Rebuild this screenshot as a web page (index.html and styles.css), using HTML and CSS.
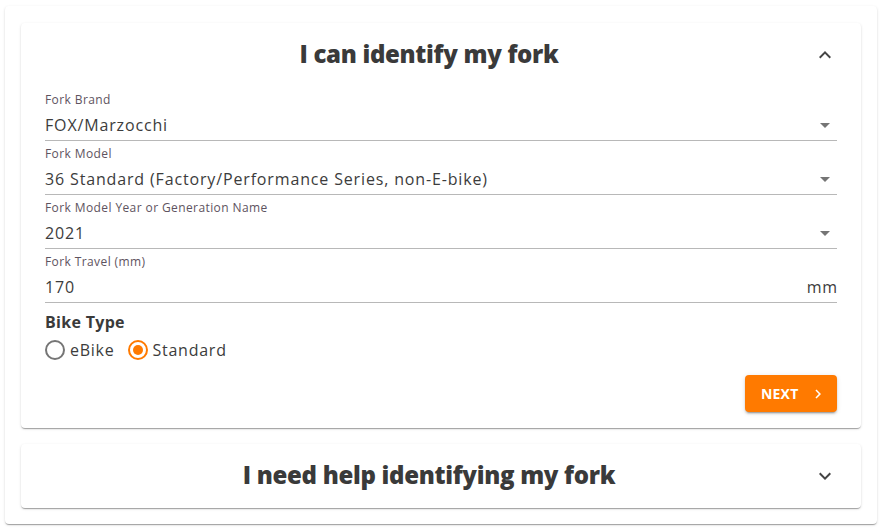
FILE: index.html
```html
<!DOCTYPE html>
<html>
<head>
<meta charset="utf-8">
<link rel="stylesheet" href="styles.css">
</head>
<body>
<div class="page">
  <div class="card">
    <section class="accordion">
      <div class="summary">
        <h2 class="title">I can identify my fork</h2>
        <svg class="chev" width="24" height="24" viewBox="0 0 24 24"><path d="M7.41 15.41 12 10.83l4.59 4.58L18 14l-6-6-6 6z" fill="#444"/></svg>
      </div>
      <div class="details">
        <div class="field">
          <div class="label">Fork Brand</div>
          <div class="input"><span class="value">FOX/Marzocchi</span><span class="caret"></span></div>
        </div>
        <div class="field">
          <div class="label">Fork Model</div>
          <div class="input"><span class="value">36 Standard (Factory/Performance Series, non-E-bike)</span><span class="caret"></span></div>
        </div>
        <div class="field">
          <div class="label">Fork Model Year or Generation Name</div>
          <div class="input"><span class="value">2021</span><span class="caret"></span></div>
        </div>
        <div class="field">
          <div class="label">Fork Travel (mm)</div>
          <div class="input"><span class="value">170</span><span class="unit">mm</span></div>
        </div>
        <div class="group-label">Bike Type</div>
        <div class="radios">
          <label class="radio"><span class="ring"></span>eBike</label>
          <label class="radio checked"><span class="ring"><span class="dot"></span></span>Standard</label>
        </div>
        <div class="actions">
          <button class="next">NEXT<svg width="18" height="18" viewBox="0 0 24 24"><path d="M10 6 8.59 7.41 13.17 12l-4.58 4.59L10 18l6-6z" fill="#fff"/></svg></button>
        </div>
      </div>
    </section>
    <section class="accordion">
      <div class="summary">
        <h2 class="title">I need help identifying my fork</h2>
        <svg class="chev" width="24" height="24" viewBox="0 0 24 24"><path d="M16.59 8.59 12 13.17 7.41 8.59 6 10l6 6 6-6z" fill="#444"/></svg>
      </div>
    </section>
  </div>
</div>
</body>
</html>
```
FILE: styles.css
```css
* { box-sizing: border-box; }
html, body { margin: 0; padding: 0; background: #fff; }
body { font-family: "Open Sans", "DejaVu Sans", sans-serif; color: #3c3c3c; }
.page { padding: 6px 5px 6px 5px; }
.card {
  background: #fff;
  border-radius: 4px;
  box-shadow: 0 2px 1px -1px rgba(0,0,0,.2), 0 1px 1px 0 rgba(0,0,0,.14), 0 1px 3px 0 rgba(0,0,0,.12);
  padding: 17px 16px 16px 16px;
  display: flex;
  flex-direction: column;
  gap: 16px;
}
.accordion {
  border-radius: 4px;
  box-shadow: 0 2px 1px -1px rgba(0,0,0,.2), 0 1px 1px 0 rgba(0,0,0,.14), 0 1px 3px 0 rgba(0,0,0,.12);
  background: #fff;
}
.summary {
  height: 64px;
  display: flex;
  align-items: center;
  justify-content: center;
  position: relative;
  padding: 0 24px 3px 0;
}
.title {
  margin: 0;
  font-size: 24px;
  font-weight: 800;
  color: #3a3a3a;
  letter-spacing: -0.3px;
}
.chev { position: absolute; right: 24px; top: 20px; }
.details { padding: 5px 24px 16px 24px; }
.field { margin-bottom: 5px; }
.label {
  font-size: 12px;
  line-height: 16px;
  color: #5e5360;
  letter-spacing: 0.4px;
}
.input {
  height: 33px;
  padding-top: 4px;
  border-bottom: 1px solid #b8b8b8;
  display: flex;
  align-items: flex-start;
  justify-content: space-between;
}
.value { font-size: 16px; line-height: 26px; color: #3c3c3c; letter-spacing: 0.85px; }
.unit { font-size: 16px; line-height: 26px; color: #3c3c3c; letter-spacing: 0.85px; margin-right: -1px; }
.caret {
  width: 0; height: 0;
  margin: 11px 7px 0 0;
  border-left: 5px solid transparent;
  border-right: 5px solid transparent;
  border-top: 5px solid #757575;
}
.group-label {
  font-size: 16px;
  font-weight: 700;
  line-height: 24px;
  margin-top: 7px;
  color: #3a3a3a;
  letter-spacing: 0.3px;
}
.radios { display: flex; gap: 13px; margin-top: 4px; }
.radio {
  display: flex;
  align-items: center;
  gap: 5px;
  font-size: 16px;
  line-height: 24px;
  color: #3c3c3c;
  letter-spacing: 0.75px;
}
.ring {
  width: 20px; height: 20px;
  border: 2px solid #757575;
  border-radius: 50%;
  display: flex; align-items: center; justify-content: center;
}
.checked .ring { border-color: #ff7a00; }
.dot { width: 10px; height: 10px; border-radius: 50%; background: #ff7a00; }
.actions { display: flex; justify-content: flex-end; margin-top: 13px; }
.next {
  background: #ff7a00;
  color: #fff;
  border: none;
  border-radius: 4px;
  height: 37px;
  width: 92px;
  padding: 0 10px 0 16px;
  font-family: "Open Sans", sans-serif;
  font-weight: 700;
  font-size: 14px;
  letter-spacing: 0.2px;
  display: flex; align-items: center; justify-content: space-between;
  box-shadow: 0 3px 1px -2px rgba(0,0,0,.2), 0 2px 2px 0 rgba(0,0,0,.14), 0 1px 5px 0 rgba(0,0,0,.12);
}
```
